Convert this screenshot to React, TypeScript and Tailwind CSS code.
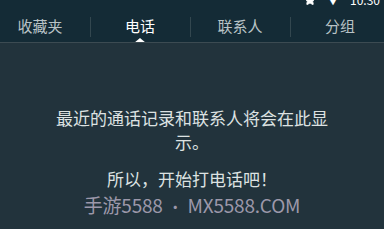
import { Star } from 'lucide-react'

const TABS = ['收藏夹', '电话', '联系人', '分组']

const font = { fontFamily: '"Noto Sans CJK SC", "Noto Sans", sans-serif' }

export default function App() {
  return (
    <main className="flex h-[229px] w-[384px] flex-col overflow-hidden bg-[#22333c]" style={font}>
      <header className="relative h-[43px] shrink-0 bg-[#142b36]">
        <div className="absolute right-0 top-[-9px] flex items-center gap-3 pr-1 text-[12px] text-white">
          <Star className="h-3 w-3 fill-white" />
          <span className="text-[10px]">▼</span>
          <span>10:30</span>
        </div>
        <nav className="-ml-[10px] flex h-full w-[400px] pt-[14px]">
          {TABS.map((tab, i) => (
            <div key={tab} className="relative flex flex-1 items-start justify-center">
              {i > 0 && <span className="absolute left-0 top-[3px] h-[20px] w-px bg-[#33474f]" />}
              <span className={`text-[15px] leading-[24px] ${i === 1 ? 'text-white' : 'text-[#b9c3c6]'}`}>{tab}</span>
              {i === 1 && (
                <span className="absolute bottom-0 left-1/2 h-0 w-0 -translate-x-1/2 border-x-[6px] border-b-[5px] border-x-transparent border-b-white" />
              )}
            </div>
          ))}
        </nav>
        <div className="absolute bottom-0 left-0 h-px w-full bg-[#3c4b52]" />
      </header>
      <section className="flex flex-1 flex-col items-center px-[50px] pt-[63px] text-center text-[#dde2e2]">
        <p className="text-[17px] leading-[24px]">最近的通话记录和联系人将会在此显示。</p>
        <p className="mt-[13px] text-[17px] leading-[24px]">所以，开始打电话吧！</p>
        <p className="mt-[1px] whitespace-nowrap text-[19px] leading-[26px] tracking-[-0.2px] text-[#9c98aa]">
          手游5588<span className="mx-[5px] text-[15px]">•</span>MX5588.COM
        </p>
      </section>
    </main>
  )
}
